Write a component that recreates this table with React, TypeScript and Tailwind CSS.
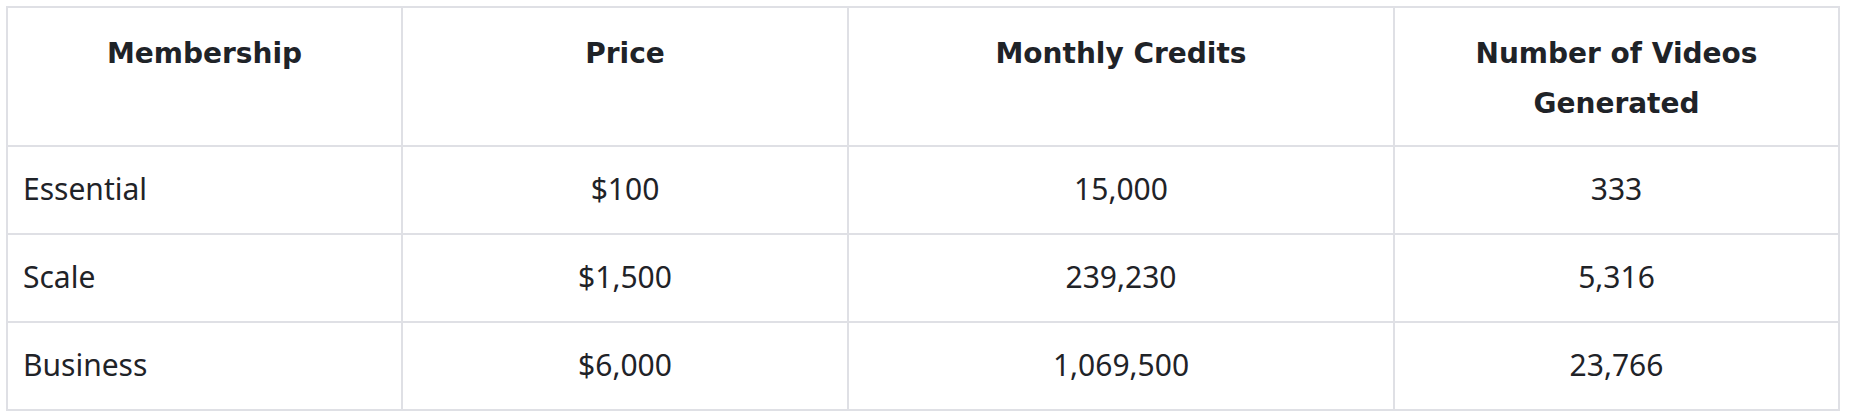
import React from "react";

const rows = [
  ["Essential", "$100", "15,000", "333"],
  ["Scale", "$1,500", "239,230", "5,316"],
  ["Business", "$6,000", "1,069,500", "23,766"],
];

const headers = ["Membership", "Price", "Monthly Credits", "Number of Videos Generated"];

export default function App() {
  return (
    <div className="w-[1854px] h-[416px] bg-white pl-[6px] pt-[6px] text-[#1f2328]">
      <div className="grid grid-cols-[395px_446px_546px_445px] border-l-2 border-t-2 border-[#dfe0e5] w-max">
        {headers.map((h) => (
          <div
            key={h}
            className="h-[139px] border-r-2 border-b-2 border-[#dfe0e5] px-[36px] pt-[21px] text-center text-[28px] leading-[50px] font-bold"
            style={{ fontFamily: '"DejaVu Sans", Verdana, sans-serif' }}
          >
            {h}
          </div>
        ))}
        {rows.map((r) =>
          r.map((c, i) => (
            <div
              key={r[0] + i}
              className={
                "h-[88px] border-r-2 border-b-2 border-[#dfe0e5] flex items-center pb-[3px] text-[30px] leading-[44px] " +
                (i === 0 ? "justify-start pl-[15px]" : "justify-center")
              }
              style={{ fontFamily: '"Noto Sans", "Open Sans", sans-serif' }}
            >
              {c}
            </div>
          ))
        )}
      </div>
    </div>
  );
}
